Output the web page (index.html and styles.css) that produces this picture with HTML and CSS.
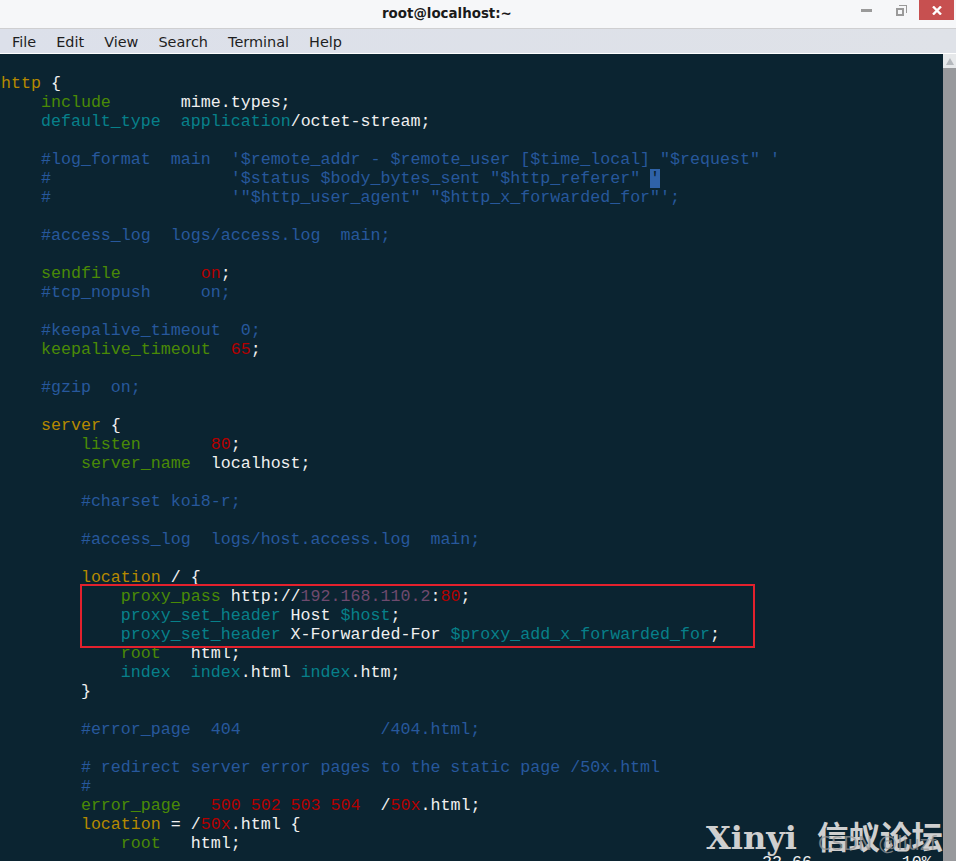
FILE: index.html
```html
<!DOCTYPE html>
<html lang="en">
<head>
<meta charset="utf-8">
<title>root@localhost:~</title>
<link rel="stylesheet" href="styles.css">
</head>
<body>
<div class="window">
  <header class="titlebar">
    <div class="title">root@localhost:~</div>
    <div class="controls">
      <svg class="ctl ctl-min" width="11" height="3" viewBox="0 0 11 3"><rect width="11" height="3" fill="#9a9a9a"/></svg>
      <svg class="ctl ctl-max" width="11" height="11" viewBox="0 0 11 11"><path d="M3 0h8v8h-1V1H3z" fill="#9a9a9a"/><path d="M0 3h8v8H0zM2 5v4h4V5z" fill="#9a9a9a" fill-rule="evenodd"/></svg>
      <div class="close"><svg width="10" height="9" viewBox="0 0 10 9"><path d="M1 0.5L9 8.5M9 0.5L1 8.5" stroke="#fff" stroke-width="2.4"/></svg></div>
    </div>
  </header>
  <nav class="menubar">
    <span class="menu-item">File</span>
    <span class="menu-item">Edit</span>
    <span class="menu-item">View</span>
    <span class="menu-item">Search</span>
    <span class="menu-item">Terminal</span>
    <span class="menu-item">Help</span>
  </nav>
  <main class="terminal">
    <pre class="code">

<span class="y">http</span> {
    <span class="g">include</span>       mime.types;
    <span class="t">default_type</span>  <span class="t">application</span>/octet-stream;

    <span class="c">#log_format  main  '$remote_addr - $remote_user [$time_local] "$request" '</span>
    <span class="c">#                  '$status $body_bytes_sent "$http_referer" </span><span class="cursor">'</span>
    <span class="c">#                  '"$http_user_agent" "$http_x_forwarded_for"';</span>

    <span class="c">#access_log  logs/access.log  main;</span>

    <span class="g">sendfile</span>        <span class="r">on</span>;
    <span class="c">#tcp_nopush     on;</span>

    <span class="c">#keepalive_timeout  0;</span>
    <span class="g">keepalive_timeout</span>  <span class="r">65</span>;

    <span class="c">#gzip  on;</span>

    <span class="y">server</span> {
        <span class="g">listen</span>       <span class="r">80</span>;
        <span class="g">server_name</span>  localhost;

        <span class="c">#charset koi8-r;</span>

        <span class="c">#access_log  logs/host.access.log  main;</span>

        <span class="y">location</span> <span class="w2">/</span> {
            <span class="g">proxy_pass</span> http://<span class="p">192.168.110.2</span>:<span class="r">80</span>;
            <span class="t">proxy_set_header</span> Host <span class="t">$host</span>;
            <span class="t">proxy_set_header</span> X-Forwarded-For <span class="t">$proxy_add_x_forwarded_for</span>;
            <span class="g">root</span>   html;
            <span class="t">index</span>  <span class="t">index</span>.html <span class="t">index</span>.htm;
        }

        <span class="c">#error_page  404              /404.html;</span>

        <span class="c"># redirect server error pages to the static page /50x.html</span>
        <span class="c">#</span>
        <span class="g">error_page</span>   <span class="r">500 502 503 504</span>  /<span class="r">50x</span>.html;
        <span class="y">location</span> = /<span class="r">50x</span>.html {
            <span class="g">root</span>   html;
<span class="status">                                                                            22,66         10%</span></pre>
    <div class="highlight"></div>
    <div class="scrollbar">
      <div class="scroll-btn"><svg width="8" height="7" viewBox="0 0 8 7"><path d="M4 0L8 7H0z" fill="#b4b8bc"/></svg></div>
      <div class="scroll-thumb"></div>
    </div>
    <div class="watermark"><span class="wm-latin">Xinyi</span><span class="wm-cjk">信蚁论坛</span><span class="wm-sub">CSDN @liuzf</span></div>
  </main>
</div>
</body>
</html>
```

FILE: styles.css
```css
* { box-sizing: border-box; }
html, body { margin: 0; padding: 0; height: 100%; overflow: hidden; }
.window { width: 956px; height: 861px; display: flex; flex-direction: column; background: #0b2431; }
.titlebar { position: relative; flex: 0 0 29px; background: #f6f7f9; border-bottom: 1px solid #cfcfd1; display: flex; align-items: center; padding-left: 382px; }
.title { font: bold 13.4px "DejaVu Sans", sans-serif; color: #1a1a1a; margin-top: -1px; }
.controls { position: absolute; top: 0; right: 2px; height: 20px; display: flex; align-items: flex-start; }
.ctl-min { margin: 9px 0 0 0; }
.ctl-max { margin: 5px 0 0 24px; }
.close { width: 35px; height: 20px; margin-left: 12px; background: #c75050; display: flex; align-items: center; justify-content: center; }
.menubar { flex: 0 0 25px; background: linear-gradient(90deg, #dce0ea, #dfe2e8); border-bottom: 1px solid #fff; display: flex; align-items: center; padding: 2px 0 0 12px; gap: 20px; font: 14.45px "DejaVu Sans", sans-serif; color: #1e1e1e; }
.menu-item { line-height: 22px; }
.terminal { position: relative; flex: 1; overflow: hidden; background: #0b2431; }
.code { margin: 0; padding: 1px 0 0 1px; font: 16.65px/19px "Liberation Mono", monospace; color: #f0f0f0; white-space: pre; }
.status { margin-left: 2px; }
.y { color: #b58900; }
.g { color: #4a8a06; }
.t { color: #07808a; }
.c { color: #27589c; }
.r { color: #b30000; }
.p { color: #6f4a6e; }
.w2 { color: #f0f0f0; }
.cursor { background: #2f62a8; color: #0b2431; }
.highlight { position: absolute; left: 80px; top: 530px; width: 675px; height: 64px; border: 2px solid #e3212d; }
.scrollbar { position: absolute; top: 0; right: 0; width: 13px; height: 100%; background: #98999c; display: flex; flex-direction: column; }
.scroll-btn { flex: 0 0 14px; background: #e6e8ea; display: flex; align-items: center; justify-content: center; }
.scroll-thumb { flex: 1; background: #98999c; }
.watermark { position: absolute; left: 706px; top: 758px; display: flex; align-items: baseline; gap: 20px; white-space: nowrap; color: #cfcfcf; }
.wm-latin { font: bold 32px "DejaVu Serif", serif; }
.wm-cjk { font: bold 31.5px "Noto Sans CJK SC", sans-serif; }
.wm-sub { position: absolute; left: 112px; top: 20px; font: 19px "DejaVu Sans", sans-serif; color: rgba(150, 150, 150, 0.75); }
```
